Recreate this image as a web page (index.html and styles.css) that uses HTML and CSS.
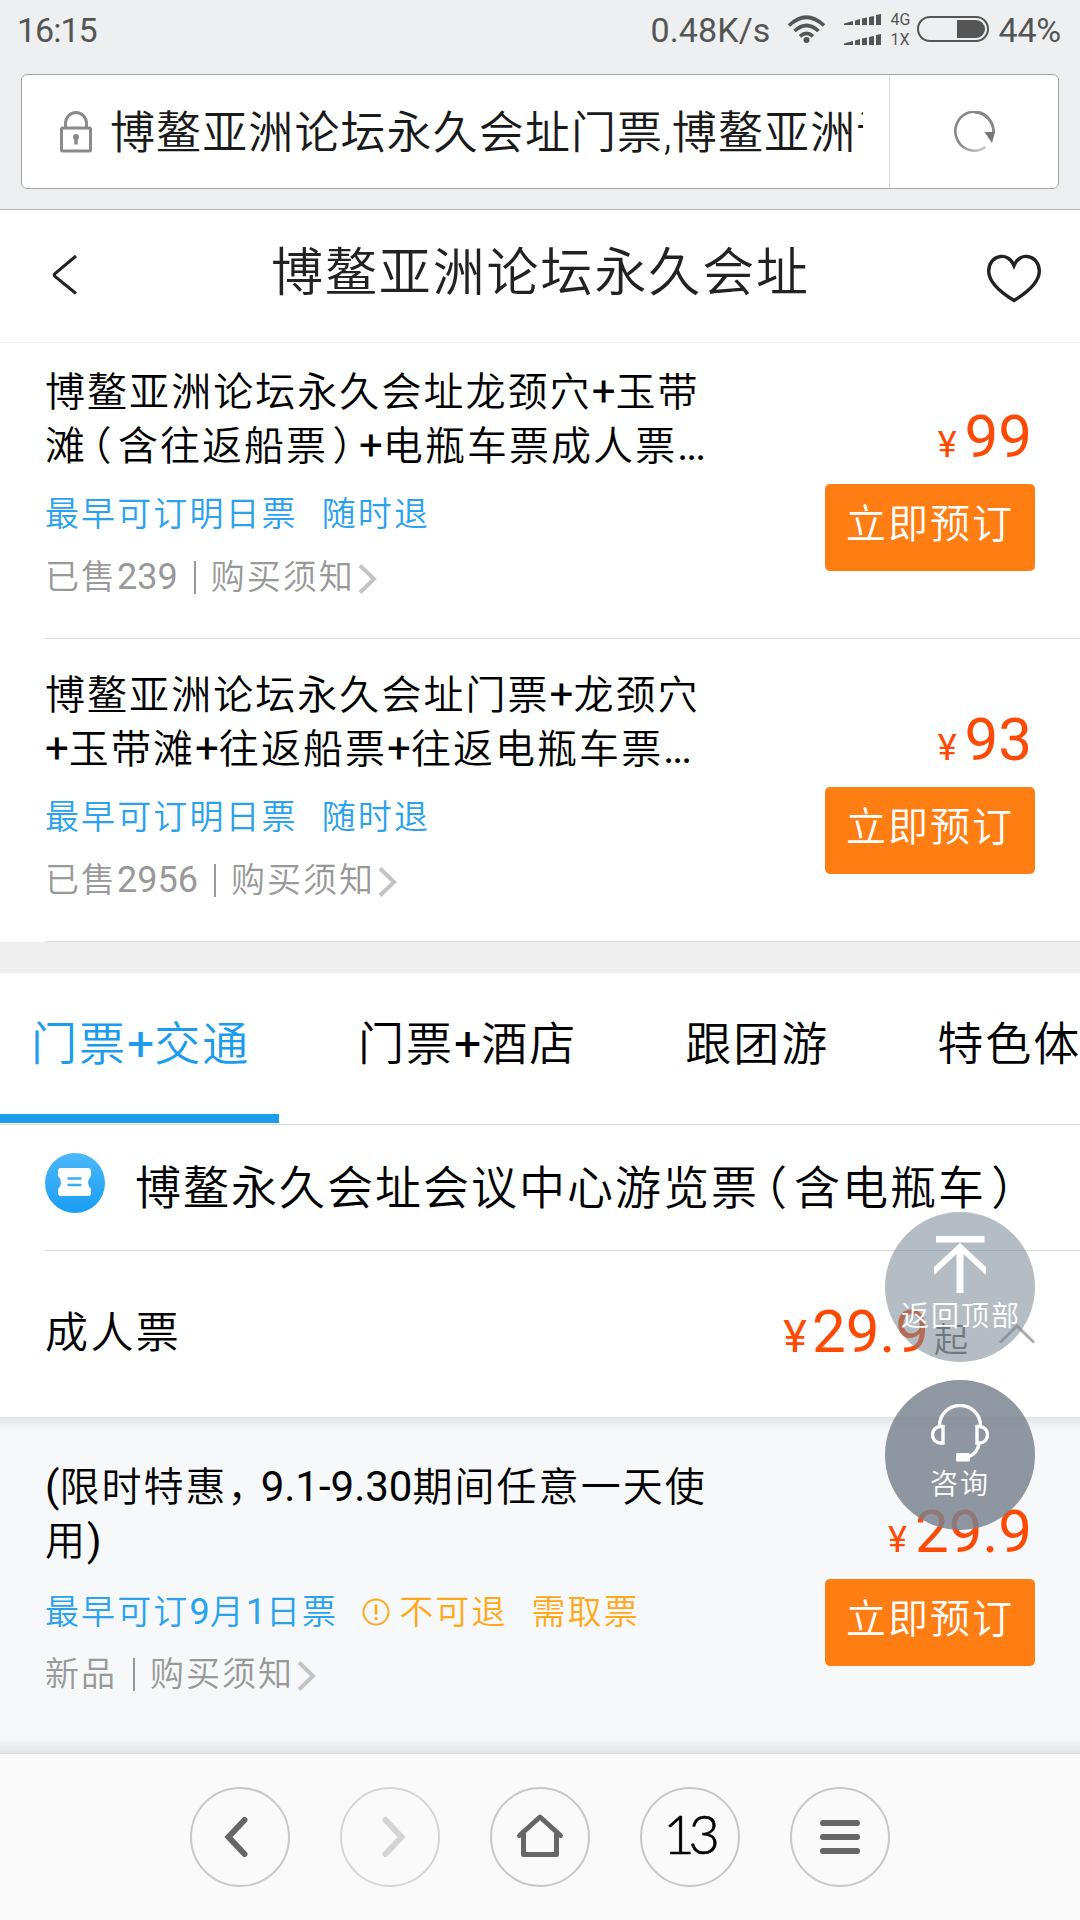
FILE: index.html
```html
<!DOCTYPE html>
<html lang="zh-CN">
<head>
<meta charset="utf-8">
<title>博鳌亚洲论坛永久会址</title>
<link rel="stylesheet" href="styles.css">
</head>
<body>
<div class="screen">
  <div class="chrome">
    <div class="status">
      <span class="clock">16:15</span>
      <span class="speed">0.48K/s</span>
      <svg class="wifi" width="40" height="30" viewBox="0 0 40 30" fill="none" stroke="#555" stroke-width="3.6"><path d="M2 11.500Q19.500-5 37 11.500M7.500 17Q19.500 6 31.500 17M13 22.300Q19.500 16.500 26 22.300"/><circle cx="19.500" cy="26" r="3" fill="#555" stroke="none"/></svg>
      <div class="sims">
        <div class="sim"><svg width="38" height="12" viewBox="0 0 38 12" fill="#555"><path d="M0 9.500L9 7V11H0ZM11 6.500L16 5V11H11ZM18 4.500L23 3.500V11H18ZM25 3L30 2V11H25ZM32 1L37 0V11H32Z"/></svg><span>4G</span></div>
        <div class="sim"><svg width="38" height="12" viewBox="0 0 38 12" fill="#555"><path d="M0 9.500L9 7V11H0ZM11 6.500L16 5V11H11ZM18 4.500L23 3.500V11H18ZM25 3L30 2V11H25ZM32 1L37 0V11H32Z"/></svg><span>1X</span></div>
      </div>
      <svg class="battery" width="72" height="26" viewBox="0 0 72 26"><rect x="1" y="1" width="70" height="24" rx="12" fill="none" stroke="#555" stroke-width="2"/><path d="M40 4H59A9 9 0 0 1 59 22H40Z" fill="#555"/></svg>
      <span class="percent">44%</span>
    </div>
    <div class="address">
      <svg class="lock" width="32" height="42" viewBox="0 0 32 42" fill="none" stroke="#8a8a8a" stroke-width="3"><rect x="1.500" y="17" width="29" height="23" rx="1"/><path d="M5.500 16V12.500a10.500 11 0 0 1 21 0V16"/><circle cx="16" cy="26" r="3" fill="#8a8a8a" stroke="none"/><path d="M16 26v7.500" stroke-width="3.500"/></svg>
      <div class="url">博鳌亚洲论坛永久会址门票<span class="comma">,</span>博鳌亚洲论坛</div>
      <div class="reload">
        <svg width="42" height="42" viewBox="0 0 42 42"><defs><linearGradient id="fade" x1="0" y1="0" x2="1" y2="1"><stop offset=".5" stop-color="#888"/><stop offset=".88" stop-color="#ccc"/></linearGradient></defs><path d="M31.500 36A19 19.500 0 1 1 39 24" fill="none" stroke="url(#fade)" stroke-width="2.600"/><path d="M20.500 1.500A19 19.500 0 0 1 39.500 22" fill="none" stroke="#888" stroke-width="2.600"/><path d="M30.500 21L41 21L38 32Z" fill="#777"/></svg>
      </div>
    </div>
  </div>

  <header class="header">
    <svg class="back" width="28" height="42" viewBox="0 0 28 42" fill="none" stroke="#222" stroke-width="3"><path d="M25 2L4 19.500Q2.500 21 4 22.500L25 39.500"/></svg>
    <h1>博鳌亚洲论坛永久会址</h1>
    <svg class="heart" width="54" height="49" viewBox="0 0 54 49" fill="none" stroke="#222" stroke-width="3.400"><path d="M27 11.500C24 4 18 1.800 13.500 2.500C6 3.500 1.700 10 1.700 17C1.700 28 13 38 27 46.500C41 38 52.300 28 52.300 17C52.300 10 48 3.500 40.500 2.500C36 1.800 30 4 27 11.500Z"/></svg>
  </header>

  <main>
    <section class="tickets">
      <article class="ticket first">
        <div class="info">
          <div class="name">博鳌亚洲论坛永久会址龙颈穴<b>+</b>玉带<br>滩<i>（</i>含往返船票<i>）</i><b>+</b>电瓶车票成人票<b class="dots">...</b></div>
          <div class="tags"><span>最早可订明日票</span><span>随时退</span></div>
          <div class="meta"><span>已售<b>239</b></span><span class="bar"></span><span>购买须知</span><svg width="20" height="32" viewBox="0 0 20 32" fill="none" stroke="#c4c4c4" stroke-width="4"><path d="M2 2.500L16 16L2 29.500"/></svg></div>
        </div>
        <div class="buy"><div class="price"><small>¥</small>99</div><div class="btn">立即预订</div></div>
      </article>
      <article class="ticket">
        <div class="info">
          <div class="name">博鳌亚洲论坛永久会址门票<b>+</b>龙颈穴<br><b>+</b>玉带滩<b>+</b>往返船票<b>+</b>往返电瓶车票<b class="dots">...</b></div>
          <div class="tags"><span>最早可订明日票</span><span>随时退</span></div>
          <div class="meta"><span>已售<b>2956</b></span><span class="bar"></span><span>购买须知</span><svg width="20" height="32" viewBox="0 0 20 32" fill="none" stroke="#c4c4c4" stroke-width="4"><path d="M2 2.500L16 16L2 29.500"/></svg></div>
        </div>
        <div class="buy"><div class="price"><small>¥</small>93</div><div class="btn">立即预订</div></div>
      </article>
    </section>
    <div class="divider"></div>
    <nav class="tabs">
      <div class="tab active">门票<b>+</b>交通</div>
      <div class="tab">门票<b>+</b>酒店</div>
      <div class="tab">跟团游</div>
      <div class="tab">特色体验</div>
    </nav>
    <div class="group">
      <svg width="60" height="60" viewBox="0 0 60 60"><defs><linearGradient id="blue" x1="0" y1="0" x2="0" y2="1"><stop offset="0" stop-color="#4db8fa"/><stop offset="1" stop-color="#179ef5"/></linearGradient></defs><circle cx="30" cy="30" r="30" fill="url(#blue)"/><path d="M16 15H43Q46 15 46 18V23Q43 26 43 29.500Q43 33 46 36V40Q46 43 43 43H16Q13 43 13 40V36Q16 33 16 29.500Q16 26 13 23V18Q13 15 16 15Z" fill="#fff"/><path d="M22.500 25.500h14M22.500 32h14" stroke="#3aadf7" stroke-width="2.400"/></svg>
      <span>博鳌永久会址会议中心游览票<i>（</i>含电瓶车<i>）</i></span>
    </div>
    <div class="kind">
      <span class="kind-name">成人票</span>
      <span class="from"><small>¥</small>29.9<em>起</em></span>
      <svg width="36" height="20" viewBox="0 0 36 20" fill="none" stroke="#aaa" stroke-width="3"><path d="M1 18.500L18 2L35 18.500"/></svg>
    </div>
    <section class="expanded">
      <article class="ticket">
        <div class="info">
          <div class="name"><b>(</b>限时特惠<u>，</u><b>9.1-9.30</b>期间任意一天使<br>用<b>)</b></div>
          <div class="tags"><span>最早可订<b>9</b>月<b>1</b>日票</span><span class="warn"><svg width="28" height="28" viewBox="0 0 28 28" fill="none" stroke="#ffaa1e" stroke-width="2"><circle cx="14" cy="14" r="12.500"/><path d="M14 6.500v10M14 19v3" stroke-width="2.600"/></svg>不可退</span><span class="warn">需取票</span></div>
          <div class="meta"><span>新品</span><span class="bar"></span><span>购买须知</span><svg width="20" height="32" viewBox="0 0 20 32" fill="none" stroke="#c4c4c4" stroke-width="4"><path d="M2 2.500L16 16L2 29.500"/></svg></div>
        </div>
        <div class="buy"><div class="price"><small>¥</small>29.9</div><div class="btn">立即预订</div></div>
      </article>
    </section>
  </main>

  <footer class="toolbar">
    <div class="tool"><svg width="50" height="50" viewBox="0 0 50 50" fill="none" stroke="#666" stroke-width="6" stroke-linecap="round"><path d="M29.500 8L13.500 25L29.500 42"/></svg></div>
    <div class="tool off"><svg width="50" height="50" viewBox="0 0 50 50" fill="none" stroke="#d4d4d4" stroke-width="6" stroke-linecap="round"><path d="M20.500 8L36.500 25L20.500 42"/></svg></div>
    <div class="tool"><svg width="50" height="50" viewBox="0 0 50 50" fill="none" stroke="#666" stroke-width="5" stroke-linecap="round" stroke-linejoin="round"><path d="M4.500 23.500L25 5L45.500 23.500M8.500 21V42.500H41.500V21"/></svg></div>
    <div class="tool count">13</div>
    <div class="tool"><svg width="50" height="50" viewBox="0 0 50 50" stroke="#666" stroke-width="6" stroke-linecap="round"><path d="M8 11H42M8 25H42M8 39H42"/></svg></div>
  </footer>

  <div class="float top">
    <svg width="52" height="58" viewBox="0 0 52 58" fill="#fff"><path d="M2 0H50.500V6.500H2ZM26 7L52 31V39L29.500 18V57H22.500V18L0 39V31Z"/></svg>
    <span>返回顶部</span>
  </div>
  <div class="float ask">
    <svg width="58" height="58" viewBox="0 0 58 58" fill="none" stroke="#fff" stroke-width="3.400"><path d="M8.500 22V21.500A20.500 20 0 0 1 49.500 21.500V22M12 22.500V39H9.500A8 8.200 0 0 1 9.500 22.500ZM46 22.500V39H48.500A8 8.200 0 0 0 48.500 22.500ZM48 40Q46 50 37 53"/><rect x="25" y="49" width="14" height="8.500" rx="1.500" fill="#fff" stroke="none"/></svg>
    <span>咨询</span>
  </div>
</div>
</body>
</html>
```

FILE: styles.css
```css
* { box-sizing: border-box; margin: 0; padding: 0; }
b, i, em, u, small { font-weight: inherit; font-style: normal; text-decoration: none; line-height: 0; }
svg { display: block; flex: none; }

body {
  width: 1080px;
  height: 1920px;
  overflow: hidden;
  background: #fff;
  font-family: Roboto, "Noto Sans CJK SC", sans-serif;
  font-weight: 350;
  color: #000;
}

.screen { position: relative; width: 1080px; height: 1920px; display: flex; flex-direction: column; overflow: hidden; }

/* browser chrome */
.chrome { height: 210px; background: #edeff1; border-bottom: 1px solid #b4b4b4; padding: 0 21px; flex: none; }
.status { height: 74px; display: flex; align-items: flex-start; padding-top: 13px; margin: 0 -2px 0 -4px; color: #555; font-size: 34px; line-height: 34px; font-weight: 400; }
.clock { letter-spacing: -1px; flex: 1; }
.speed { letter-spacing: .1px; margin-right: 17px; }
.wifi { margin-top: 1px; }
.sims { display: flex; flex-direction: column; gap: 4px; margin-left: 17px; margin-top: -1px; }
.sim { display: flex; align-items: center; gap: 8px; font-size: 16px; line-height: 16px; height: 16px; width: 73px; }
.battery { margin-top: 3px; }
.percent { margin-left: 9px; letter-spacing: -.2px; }

.address { height: 115px; display: flex; align-items: center; background: #fff; border: 1px solid #a5a5a5; border-radius: 6px; padding-left: 38px; }
.lock { margin-right: 18px; }
.url { width: 753px; overflow: hidden; white-space: nowrap; font-size: 45px; letter-spacing: 1.100px; line-height: 60px; padding-top: 4px; color: #1a1a1a; }
.comma { letter-spacing: 0; }
.reload { margin-left: auto; width: 169px; height: 100%; display: flex; align-items: center; justify-content: center; border-left: 1px solid #dcdcdc; padding-left: 2px; }

/* page header */
.header { height: 133px; flex: none; display: flex; align-items: center; justify-content: space-between; padding: 0 39px 0 51px; border-bottom: 1px solid #f3f3f3; }
.back { margin-top: -3px; }
.header h1 { font-size: 52px; letter-spacing: 1.900px; font-weight: 350; line-height: 60px; margin: 0 0 4px 15px; color: #222; }
.heart { margin-top: 4px; }

/* ticket rows */
.ticket { display: flex; justify-content: space-between; height: 303px; margin-left: 45px; padding: 29px 45px 0 0; border-bottom: 1px solid #d9d9d9; }
.ticket.first { height: 296px; padding-top: 22px; }
.name { font-size: 40px; letter-spacing: 2.050px; line-height: 54px; white-space: nowrap; padding-top: 1px; }
.name b { font-size: 42px; letter-spacing: 0; font-weight: 400; }
.name .dots { letter-spacing: -2px; }
.name i { font-feature-settings: "halt"; margin: 0 .11em; }
.name u { margin-right: -9px; }
.group i { font-feature-settings: "halt"; margin: 0 .11em; }
.tags { display: flex; margin-top: 20px; font-size: 34px; letter-spacing: 2.100px; line-height: 40px; color: #2aa2ee; gap: 24px; }
.tags b, .meta b { font-size: 36px; letter-spacing: 0; font-weight: 400; }
.warn { display: flex; align-items: center; color: #ffa91a; }
.warn svg { margin-right: 9px; }
.meta { display: flex; align-items: center; margin-top: 23px; font-size: 34px; letter-spacing: 2px; line-height: 40px; color: #999; }
.meta svg { margin-top: 4px; margin-left: 3px; }
.bar { width: 2px; height: 33px; margin: 0 15px 0 16px; background: #999; }
.buy { display: flex; flex-direction: column; align-items: flex-end; padding-top: 42px; }
.price { font-size: 60px; line-height: 60px; color: #ff4a05; font-weight: 400; margin-right: 3px; }
.price small { font-size: 36px; margin-right: 8px; }
.btn { width: 210px; height: 87px; margin-top: 17px; background: #ff7e14; border-radius: 5px; color: #fff; font-size: 40px; letter-spacing: 2px; line-height: 81px; text-align: center; }

.divider { height: 31px; background: #eee; }

/* category tabs */
.tabs { display: flex; height: 152px; border-bottom: 1px solid #d9d9d9; overflow: hidden; white-space: nowrap; font-size: 46px; letter-spacing: 2px; line-height: 143px; }
.tab { padding-left: 31px; margin-right: 77px; flex: none; }
.tab b { font-size: 48px; letter-spacing: 0; font-weight: 400; }
.tab.active { width: 279px; height: 150px; margin-right: 48px; color: #1b9ced; border-bottom: 9px solid #1b9ced; }

.group { height: 126px; display: flex; align-items: center; gap: 30px; margin-left: 45px; padding-bottom: 9px; border-bottom: 1px solid #d9d9d9; font-size: 46px; letter-spacing: 2px; }
.group span { padding-top: 1px; }
.kind { height: 166px; display: flex; align-items: center; padding: 0 45px; }
.kind-name { flex: 1; font-size: 43px; letter-spacing: 2.400px; padding-bottom: 10px; }
.from { font-size: 60px; color: #ff4a05; font-weight: 400; line-height: 60px; padding-bottom: 5px; }
.from small { font-size: 45px; margin-right: 5px; }
.from em { font-size: 34px; color: #666; margin-left: 5px; font-weight: 350; }
.kind svg { margin-left: 31px; }

.expanded { height: 336px; padding-top: 14px; background: linear-gradient(#e1e4e7, #f6f8fa 14px, #f6f8fa 322px, #e1e5e8); }
.expanded .ticket { border: 0; }
.expanded .tags { margin-top: 23px; }
.expanded .meta { margin-top: 22px; }

/* browser toolbar */
.toolbar { flex: 1; display: flex; justify-content: center; gap: 50px; padding-top: 33px; background: #fafafa; border-top: 1px solid #dcdcdc; }
.tool { width: 100px; height: 100px; border: 2px solid #c8c8c8; border-radius: 50%; display: flex; align-items: center; justify-content: center; }
.tool.off { border-color: #d6d6d6; }
.count { font-family: Lato, sans-serif; font-weight: 300; font-size: 54px; letter-spacing: -6px; padding: 0 3px 7px 0; -webkit-text-stroke: .6px #000; }

/* floating buttons */
.float { position: absolute; left: 885px; width: 150px; height: 150px; border-radius: 50%; display: flex; flex-direction: column; align-items: center; color: #fff; font-size: 28px; letter-spacing: 2px; line-height: 34px; padding-top: 24px; }
.float span { margin-right: -2px; }
.top { top: 1212px; background: rgba(120, 134, 147, .55); }
.top span { margin-top: 6px; }
.ask { top: 1380px; background: rgba(120, 130, 143, .83); }
.ask span { margin-top: 6px; margin-right: 0; }
```
